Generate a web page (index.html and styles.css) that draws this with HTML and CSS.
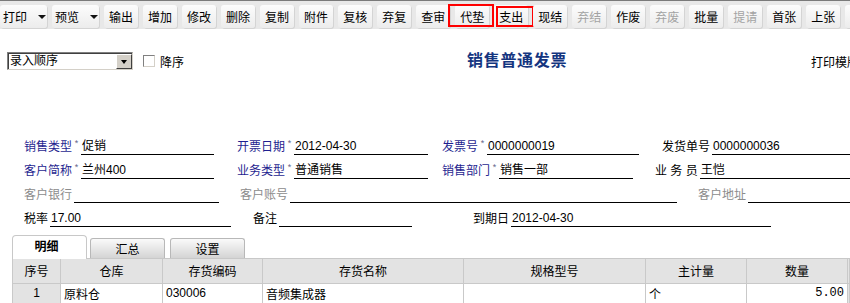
FILE: index.html
```html
<!DOCTYPE html>
<html lang="zh-CN">
<head>
  <meta charset="UTF-8">
  <title>销售普通发票</title>
  <link rel="stylesheet" href="styles.css">
</head>
<body>
  <!-- Toolbar -->
  <div class="toolbar">
    <button class="tb-btn split">打印<i class="caret"></i></button>
    <button class="tb-btn split">预览<i class="caret"></i></button>
    <button class="tb-btn">输出</button>
    <button class="tb-btn">增加</button>
    <button class="tb-btn">修改</button>
    <button class="tb-btn">删除</button>
    <button class="tb-btn">复制</button>
    <button class="tb-btn">附件</button>
    <button class="tb-btn">复核</button>
    <button class="tb-btn">弃复</button>
    <button class="tb-btn">查审</button>
    <button class="tb-btn mark mark-a">代垫</button>
    <button class="tb-btn mark mark-b">支出</button>
    <button class="tb-btn">现结</button>
    <button class="tb-btn off">弃结</button>
    <button class="tb-btn">作废</button>
    <button class="tb-btn off">弃废</button>
    <button class="tb-btn">批量</button>
    <button class="tb-btn off">提请</button>
    <button class="tb-btn">首张</button>
    <button class="tb-btn">上张</button>
    <button class="tb-btn">下张</button>
  </div>

  <!-- Sort options / title -->
  <div class="head">
    <div class="head-left">
      <div class="combo">
        <span class="combo-text">录入顺序</span>
        <span class="combo-btn"><i></i></span>
      </div>
      <label class="check"><span class="box"></span>降序</label>
    </div>
    <h1 class="title">销售普通发票</h1>
    <div class="tpl">打印模版</div>
  </div>

  <!-- Invoice header fields -->
  <div class="form">
    <div class="row">
      <div class="field f-saletype"><span class="lbl key">销售类型</span><span class="req">*</span><span class="val">促销</span></div>
      <div class="field f-billdate"><span class="lbl key">开票日期</span><span class="req">*</span><span class="val">2012-04-30</span></div>
      <div class="field f-billno"><span class="lbl key">发票号</span><span class="req">*</span><span class="val">0000000019</span></div>
      <div class="field grow"><span class="lbl">发货单号</span><span class="val">0000000036</span></div>
    </div>
    <div class="row">
      <div class="field f-customer"><span class="lbl key">客户简称</span><span class="req">*</span><span class="val">兰州400</span></div>
      <div class="field f-biztype"><span class="lbl key">业务类型</span><span class="req">*</span><span class="val">普通销售</span></div>
      <div class="field f-dept"><span class="lbl key">销售部门</span><span class="req">*</span><span class="val">销售一部</span></div>
      <div class="field grow"><span class="lbl">业 务 员</span><span class="val">王恺</span></div>
    </div>
    <div class="row">
      <div class="field f-bank"><span class="lbl muted">客户银行</span><span class="val"></span></div>
      <div class="field f-account"><span class="lbl muted">客户账号</span><span class="val"></span></div>
      <div class="field grow"><span class="lbl muted">客户地址</span><span class="val"></span></div>
    </div>
    <div class="row">
      <div class="field f-tax"><span class="lbl">税率</span><span class="val">17.00</span></div>
      <div class="field f-memo"><span class="lbl">备注</span><span class="val"></span></div>
      <div class="field f-due"><span class="lbl">到期日</span><span class="val">2012-04-30</span></div>
    </div>
  </div>

  <!-- Tabs -->
  <div class="tabs">
    <div class="tab active">明细</div>
    <div class="tab">汇总</div>
    <div class="tab">设置</div>
  </div>

  <!-- Detail grid -->
  <table class="grid">
    <colgroup>
      <col style="width:48px"><col style="width:102px"><col style="width:100px"><col style="width:201px">
      <col style="width:182px"><col style="width:101px"><col style="width:101px"><col>
    </colgroup>
    <thead>
      <tr><th>序号</th><th>仓库</th><th>存货编码</th><th>存货名称</th><th>规格型号</th><th>主计量</th><th>数量</th><th></th></tr>
    </thead>
    <tbody>
      <tr><td class="idx">1</td><td>原料仓</td><td>030006</td><td>音频集成器</td><td></td><td>个</td><td class="num">5.00</td><td class="rest"></td></tr>
    </tbody>
  </table>
</body>
</html>
```

FILE: styles.css
```css
/* Base */
* {
  box-sizing: border-box;
}

body {
  margin: 0;
  font: 12px "Liberation Sans", "Noto Sans CJK SC", sans-serif;
  color: #000;
  background: #fff;
  overflow: hidden;
}

/* Toolbar */
.toolbar {
  display: flex;
  align-items: flex-start;
  gap: 5px;
  height: 29px;
  padding-top: 4px;
  border-top: 1px solid #7a7a7a;
  background: #e8e8e8;
  overflow: hidden;
}

.tb-btn {
  flex: none;
  position: relative;
  display: flex;
  align-items: center;
  height: 23px;
  padding: 0 5px;
  border: 0;
  border-radius: 3px;
  background: linear-gradient(#fcfcfc, #ececec);
  box-shadow: 1px 1px 0 #d4d4d4;
  font: inherit;
  color: #000;
}

.tb-btn.split {
  padding: 0 1px 0 3px;
}

.caret {
  width: 0;
  height: 0;
  margin-left: 11px;
  border-left: 4px solid transparent;
  border-right: 4px solid transparent;
  border-top: 4px solid #111;
}

.tb-btn.off {
  color: #a3a3a3;
}

/* red highlight frames */
.tb-btn.mark::after {
  content: "";
  position: absolute;
  border: 2px solid #f00;
}

.mark-a::after {
  left: -7px;
  top: -1px;
  width: 42px;
  height: 19px;
}

.mark-b::after {
  left: 2px;
  top: 1px;
  width: 34px;
  height: 17px;
}

/* Sort / title row */
.head {
  display: grid;
  grid-template-columns: 467px 344px 1fr;
  align-items: center;
  height: 18px;
  margin-top: 23px;
  white-space: nowrap;
  overflow: hidden;
}

.head-left {
  display: flex;
  align-items: center;
  padding-left: 7px;
}

.combo {
  display: flex;
  width: 126px;
  height: 18px;
  border: 1px solid;
  border-color: #808080 #d4d0c8 #d4d0c8 #808080;
  box-shadow: inset 1px 1px 0 #404040;
  background: #fff;
}

.combo-text {
  flex: 1;
  padding: 1px 0 0 2px;
  line-height: 14px;
}

.combo-btn {
  display: flex;
  align-items: center;
  justify-content: center;
  width: 16px;
  margin: 1px 0 0;
  background: #d4d0c8;
  border: 1px solid;
  border-color: #fff #404040 #404040 #fff;
}

.combo-btn i {
  width: 0;
  height: 0;
  border-left: 3px solid transparent;
  border-right: 3px solid transparent;
  border-top: 4px solid #000;
}

.check {
  display: flex;
  align-items: center;
  margin-left: 10px;
}

.check .box {
  width: 12px;
  height: 12px;
  margin-right: 5px;
  border: 1px solid;
  border-color: #808080 #d4d0c8 #d4d0c8 #808080;
  background: #fff;
}

.title {
  margin: 0;
  font-size: 16px;
  font-weight: bold;
  line-height: 18px;
  letter-spacing: 0.7px;
  color: #14357f;
}

/* Form fields */
.form {
  margin-top: 61px;
  padding-left: 24px;
}

.row {
  display: flex;
  align-items: flex-end;
  height: 24px;
}

.field {
  display: flex;
  align-items: flex-end;
  flex: none;
}

.field.grow {
  flex: 1;
}

.lbl {
  margin-right: 2px;
  line-height: 16px;
  white-space: pre;
}

.lbl.key {
  margin-right: 0;
  color: #1f1f90;
}

.lbl.muted {
  color: #8c8c8c;
}

.req {
  width: 9px;
  height: 17px;
  font-size: 9px;
  line-height: 10px;
  text-align: center;
  color: #66668a;
}

.val {
  flex: 1;
  height: 17px;
  padding-left: 1px;
  line-height: 16px;
  border-bottom: 1px solid #000;
  white-space: nowrap;
}

.f-saletype, .f-customer { width: 190px; margin-right: 23px; }
.f-billdate, .f-biztype { width: 191px; margin-right: 14px; }
.f-billno { width: 197px; margin-right: 23px; }
.f-dept { width: 191px; margin-right: 22px; }
.f-bank { width: 195px; margin-right: 21px; }
.f-account { width: 437px; margin-right: 21px; }
.f-tax { width: 207px; margin-right: 22px; }
.f-memo { width: 159px; margin-right: 61px; }
.f-due { width: 298px; }

/* Tabs */
.tabs {
  display: flex;
  align-items: flex-end;
  height: 24px;
  margin: 8px 0 0 12px;
  border-bottom: 1px solid #c8c8c8;
}

.tab {
  width: 75px;
  height: 20px;
  margin-left: 5px;
  padding-top: 3px;
  line-height: 16px;
  text-align: center;
  border: 1px solid #b8b8b8;
  border-bottom: 0;
  border-radius: 3px 3px 0 0;
  background: linear-gradient(#fafafa, #d4d4d4);
}

.tab.active {
  height: 24px;
  margin: 0 0 -1px 0;
  padding: 3px 6px 0 0;
  font-weight: bold;
  border-color: #c8c8c8;
  border-radius: 4px 4px 0 0;
  background: #fff;
}

.tab.active + .tab {
  margin-left: 3px;
}

/* Detail grid */
.grid {
  width: 838px;
  margin-left: 12px;
  table-layout: fixed;
  border-collapse: collapse;
}

.grid th,
.grid td {
  padding: 0 3px;
  border: 1px solid #c9c9c9;
  font-weight: normal;
  white-space: nowrap;
  overflow: hidden;
}

.grid th {
  height: 24px;
  border-top: 0;
  background: #e3e3e3;
  text-align: center;
}

.grid td {
  height: 20px;
  text-align: left;
}

.grid td.idx {
  background: #e3e3e3;
  text-align: center;
}

.grid td.num {
  text-align: right;
  font-family: "Liberation Mono", monospace;
}

.grid td.rest {
  background: #e3e3e3;
}
```
